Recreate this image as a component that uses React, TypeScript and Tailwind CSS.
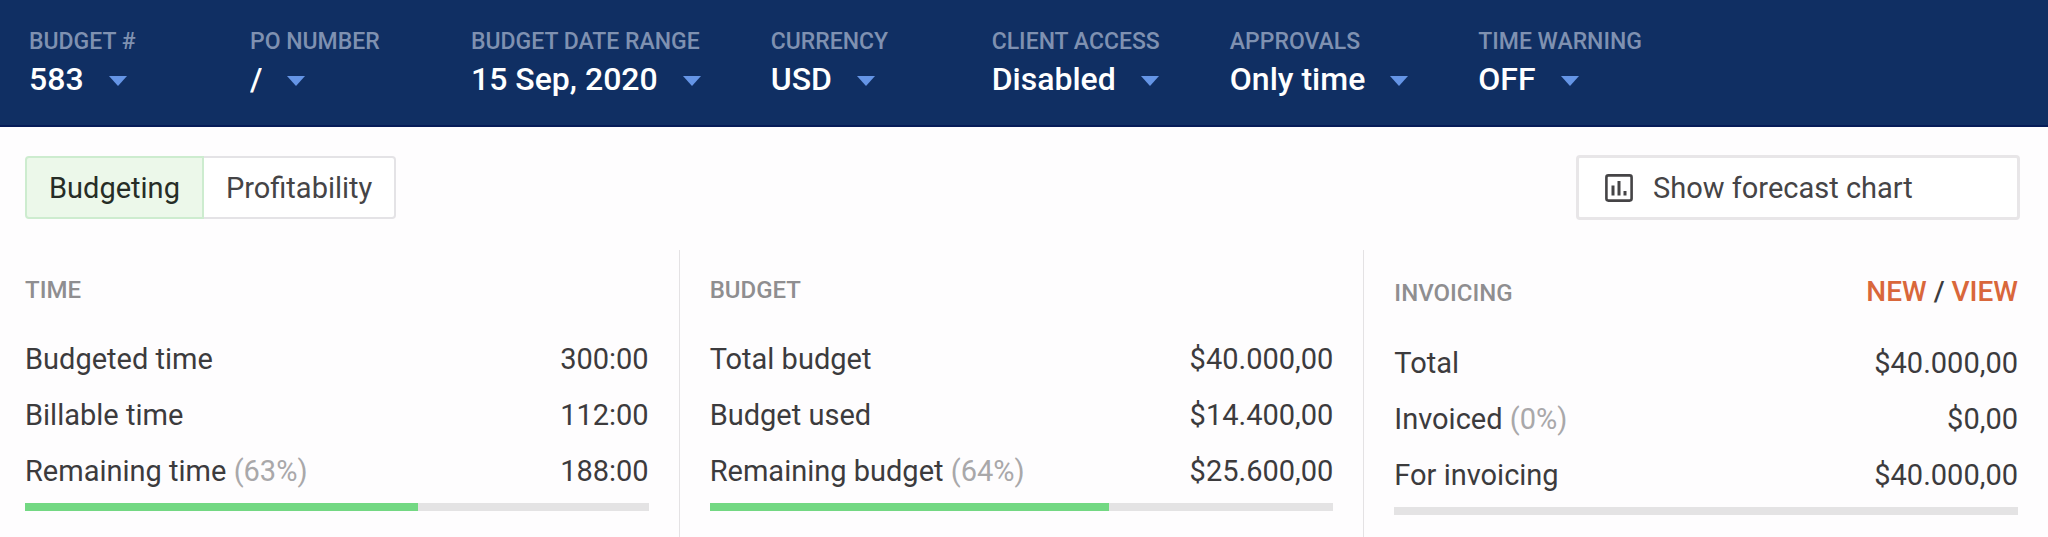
import { useState } from 'react';

type Row = { label: string; note?: string; value: string };

const filters = [
    { id: 'budget-number', label: 'BUDGET #', options: ['583'] },
    { id: 'po-number', label: 'PO NUMBER', options: ['/'] },
    { id: 'date-range', label: 'BUDGET DATE RANGE', options: ['15 Sep, 2020'] },
    { id: 'currency', label: 'CURRENCY', options: ['USD', 'EUR'] },
    { id: 'client-access', label: 'CLIENT ACCESS', options: ['Disabled', 'Enabled'] },
    { id: 'approvals', label: 'APPROVALS', options: ['Only time', 'None'] },
    { id: 'time-warning', label: 'TIME WARNING', options: ['OFF', 'ON'] },
];

const timeRows: Row[] = [
    { label: 'Budgeted time', value: '300:00' },
    { label: 'Billable time', value: '112:00' },
    { label: 'Remaining time', note: '(63%)', value: '188:00' },
];

const budgetRows: Row[] = [
    { label: 'Total budget', value: '$40.000,00' },
    { label: 'Budget used', value: '$14.400,00' },
    { label: 'Remaining budget', note: '(64%)', value: '$25.600,00' },
];

const invoicingRows: Row[] = [
    { label: 'Total', value: '$40.000,00' },
    { label: 'Invoiced', note: '(0%)', value: '$0,00' },
    { label: 'For invoicing', value: '$40.000,00' },
];

function Filter({ id, label, options }: { id: string; label: string; options: string[] }) {
    return (
        <div className="flex flex-col items-start min-w-[151px]">
            <label htmlFor={id} className="text-[23px] leading-7 font-medium text-[#7f91b1] whitespace-nowrap">
                {label}
            </label>
            <div className="relative mt-[3px]">
                <select
                    id={id}
                    className="block appearance-none field-sizing-content bg-transparent pr-[43px] text-[32px] leading-10 font-medium text-white cursor-pointer"
                >
                    {options.map((option) => (
                        <option key={option} className="text-black">{option}</option>
                    ))}
                </select>
                <svg
                    viewBox="0 0 18 10"
                    className="absolute right-0 top-[17px] w-[18px] h-[10px] pointer-events-none"
                    aria-hidden="true"
                >
                    <path d="M0 0h18L9 10z" fill="#6595e6" />
                </svg>
            </div>
        </div>
    );
}

function ChartIcon() {
    return (
        <svg viewBox="0 0 28 28" className="w-7 h-7" fill="none" stroke="#454446" aria-hidden="true">
            <rect x="1.4" y="1.4" width="25.2" height="25.2" rx="2" strokeWidth="2.6" />
            <path d="M8 11.5V21.5M14 7V21.5M20 17V21.5" strokeWidth="3" />
        </svg>
    );
}

function Panel({ title, rows, progress, links }: {
    title: string;
    rows: Row[];
    progress: number;
    links?: boolean;
}) {
    return (
        <section className="flex-1 min-w-0 pt-[22px] pb-4">
            <div className="flex items-baseline justify-between">
                <h2 className="text-2xl leading-9 font-medium text-[#8f8e90]">{title}</h2>
                {links && (
                    <div className="text-[28px] leading-10 font-medium text-[#3c3b3d]">
                        <a href="#new" className="text-[#d9673b]">NEW</a>
                        {' / '}
                        <a href="#view" className="text-[#d9673b]">VIEW</a>
                    </div>
                )}
            </div>
            <table className="w-full mt-[23px] text-[29px] leading-9 text-[#3c3b3d]">
                <tbody>
                    {rows.map((row) => (
                        <tr key={row.label} className="h-14">
                            <th scope="row" className="p-0 text-left font-normal whitespace-nowrap">
                                {row.label}
                                {row.note && <span className="text-[#a9a8aa]"> {row.note}</span>}
                            </th>
                            <td className="p-0 text-right">{row.value}</td>
                        </tr>
                    ))}
                </tbody>
            </table>
            <div
                role="progressbar"
                aria-label={title}
                aria-valuenow={progress}
                aria-valuemin={0}
                aria-valuemax={100}
                className="mt-1 h-2 bg-[#e4e3e4]"
            >
                <div className="h-full bg-[#73d883]" style={{ width: `${progress}%` }} />
            </div>
        </section>
    );
}

export default function App() {
    const [tab, setTab] = useState('budgeting');

    const active = 'border-[#cdeccf] bg-[#ecf8ea] text-[#262d26]';
    const inactive = 'border-[#e4e3e6] bg-white text-[#454446]';

    return (
        <div className="flex flex-col min-h-screen bg-[#fefdfe] font-['Roboto',sans-serif]">
            <header className="flex flex-wrap gap-x-[70px] gap-y-4 pt-7 pb-[26px] px-[29px] bg-[#102f63] border-b-2 border-[#061c58]">
                {filters.map((filter) => (
                    <Filter key={filter.id} {...filter} />
                ))}
            </header>

            <div className="flex items-center justify-between pt-7 pb-[30px] pl-[25px] pr-7">
                <div className="flex text-[29px] leading-9">
                    <button
                        type="button"
                        onClick={() => setTab('budgeting')}
                        className={`h-[63px] px-[22px] border-2 rounded-l-sm ${tab === 'budgeting' ? active : inactive}`}
                    >
                        Budgeting
                    </button>
                    <button
                        type="button"
                        onClick={() => setTab('profitability')}
                        className={`h-[63px] px-[22px] border-2 border-l-0 rounded-r-sm ${tab === 'profitability' ? active : inactive}`}
                    >
                        Profitability
                    </button>
                </div>
                <button
                    type="button"
                    className="flex items-center gap-5 w-[444px] h-[65px] px-[26px] border-3 border-[#e8e6e8] rounded-sm bg-white text-[29px] leading-9 text-[#454446]"
                >
                    <ChartIcon />
                    Show forecast chart
                </button>
            </div>

            <main className="flex flex-1 gap-[30px] pl-[25px] pr-[30px]">
                <Panel title="TIME" rows={timeRows} progress={63} />
                <div className="w-px bg-[#e4e2e4]" />
                <Panel title="BUDGET" rows={budgetRows} progress={64} />
                <div className="w-px bg-[#e4e2e4]" />
                <Panel title="INVOICING" rows={invoicingRows} progress={0} links />
            </main>
        </div>
    );
}
